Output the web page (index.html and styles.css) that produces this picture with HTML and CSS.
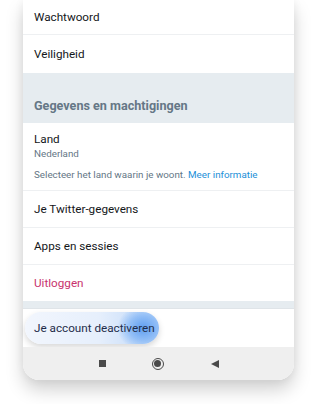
FILE: index.html
```html
<!DOCTYPE html>
<html>
<head>
<meta charset="utf-8">
<link rel="stylesheet" href="styles.css">
</head>
<body>
<div class="phone">
  <div class="row first"><span>Wachtwoord</span></div>
  <div class="row second"><span>Veiligheid</span></div>
  <div class="section"><span>Gegevens en machtigingen</span></div>
  <div class="land">
    <div class="title">Land</div>
    <div class="sub">Nederland</div>
    <div class="note">Selecteer het land waarin je woont. <span class="link">Meer informatie</span></div>
  </div>
  <div class="row"><span>Je Twitter-gegevens</span></div>
  <div class="row"><span>Apps en sessies</span></div>
  <div class="row logout"><span>Uitloggen</span></div>
  <div class="band"></div>
  <div class="deact">
    <div class="pill">Je account deactiveren</div>
  </div>
  <div class="nav">
    <span class="sq"></span>
    <span class="home"><span class="dot"></span></span>
    <span class="back"></span>
  </div>
</div>
</body>
</html>
```
FILE: styles.css
```css
html, body {
  margin: 0;
  padding: 0;
  background: #ffffff;
}
body {
  width: 316px;
  height: 404px;
  overflow: hidden;
  font-family: Roboto, "Noto Sans", Arial, sans-serif;
  color: #14171a;
}
.phone {
  margin-left: 23px;
  width: 271px;
  background: #ffffff;
  border-radius: 0 0 16px 16px;
  box-shadow: 0 10px 18px rgba(0,0,0,0.18), 0 0 10px rgba(0,0,0,0.06);
  display: flex;
  flex-direction: column;
}
.row {
  height: 36px;
  display: flex;
  align-items: center;
  padding-left: 11px;
  font-size: 11.7px;
  border-top: 1px solid #eef0f2;
}
.row.first {
  height: 34px;
  border-top: none;
}
.row.second { height: 38px; }
.section {
  height: 50px;
  background: #e6ecf0;
  display: flex;
  align-items: flex-end;
  padding-left: 11px;
  padding-bottom: 10px;
  box-sizing: border-box;
  font-size: 12.6px;
  font-weight: 700;
  color: #657786;
}
.land {
  height: 67px;
  padding-left: 11px;
  box-sizing: border-box;
  padding-top: 9px;
}
.land .title {
  font-size: 11.7px;
  line-height: 15px;
}
.land .sub {
  font-size: 9.8px;
  color: #657786;
  line-height: 13px;
}
.land .note {
  font-size: 9.8px;
  color: #657786;
  line-height: 13px;
  margin-top: 8px;
}
.link {
  color: #1d8fd8;
}
.logout {
  color: #c8336e;
}
.band {
  height: 7px;
  background: #e6ecf0;
  border-bottom: 1px solid #dfe4e8;
}
.deact {
  height: 38px;
  display: flex;
  align-items: center;
  background: #ffffff;
}
.pill {
  margin-left: 2px;
  height: 32px;
  width: 134px;
  border-radius: 16px;
  display: flex;
  align-items: center;
  padding-left: 9px;
  box-sizing: border-box;
  font-size: 11.7px;
  color: #1f2d4a;
  background:
    radial-gradient(ellipse 26px 22px at 118px 16px, rgba(90,155,240,0.95), rgba(110,170,245,0.6) 55%, rgba(160,200,250,0) 100%),
    linear-gradient(90deg, #f2f6fd 0%, #e6effc 55%, #bcd6f8 100%);
  box-shadow: 0 3px 6px rgba(0,0,0,0.16);
}
.nav {
  height: 33px;
  background: #efefef;
  border-radius: 0 0 16px 16px;
  display: flex;
  align-items: center;
  justify-content: center;
}
.sq {
  width: 7px;
  height: 7px;
  background: #4a4a4a;
  margin-right: 46px;
}
.home {
  width: 10px;
  height: 10px;
  border: 1.5px solid #4a4a4a;
  border-radius: 50%;
  display: flex;
  align-items: center;
  justify-content: center;
  margin-right: 47px;
}
.dot {
  width: 7px;
  height: 7px;
  border-radius: 50%;
  background: #4a4a4a;
}
.back {
  width: 0;
  height: 0;
  border-top: 4.5px solid transparent;
  border-bottom: 4.5px solid transparent;
  border-right: 8px solid #4a4a4a;
}
```
